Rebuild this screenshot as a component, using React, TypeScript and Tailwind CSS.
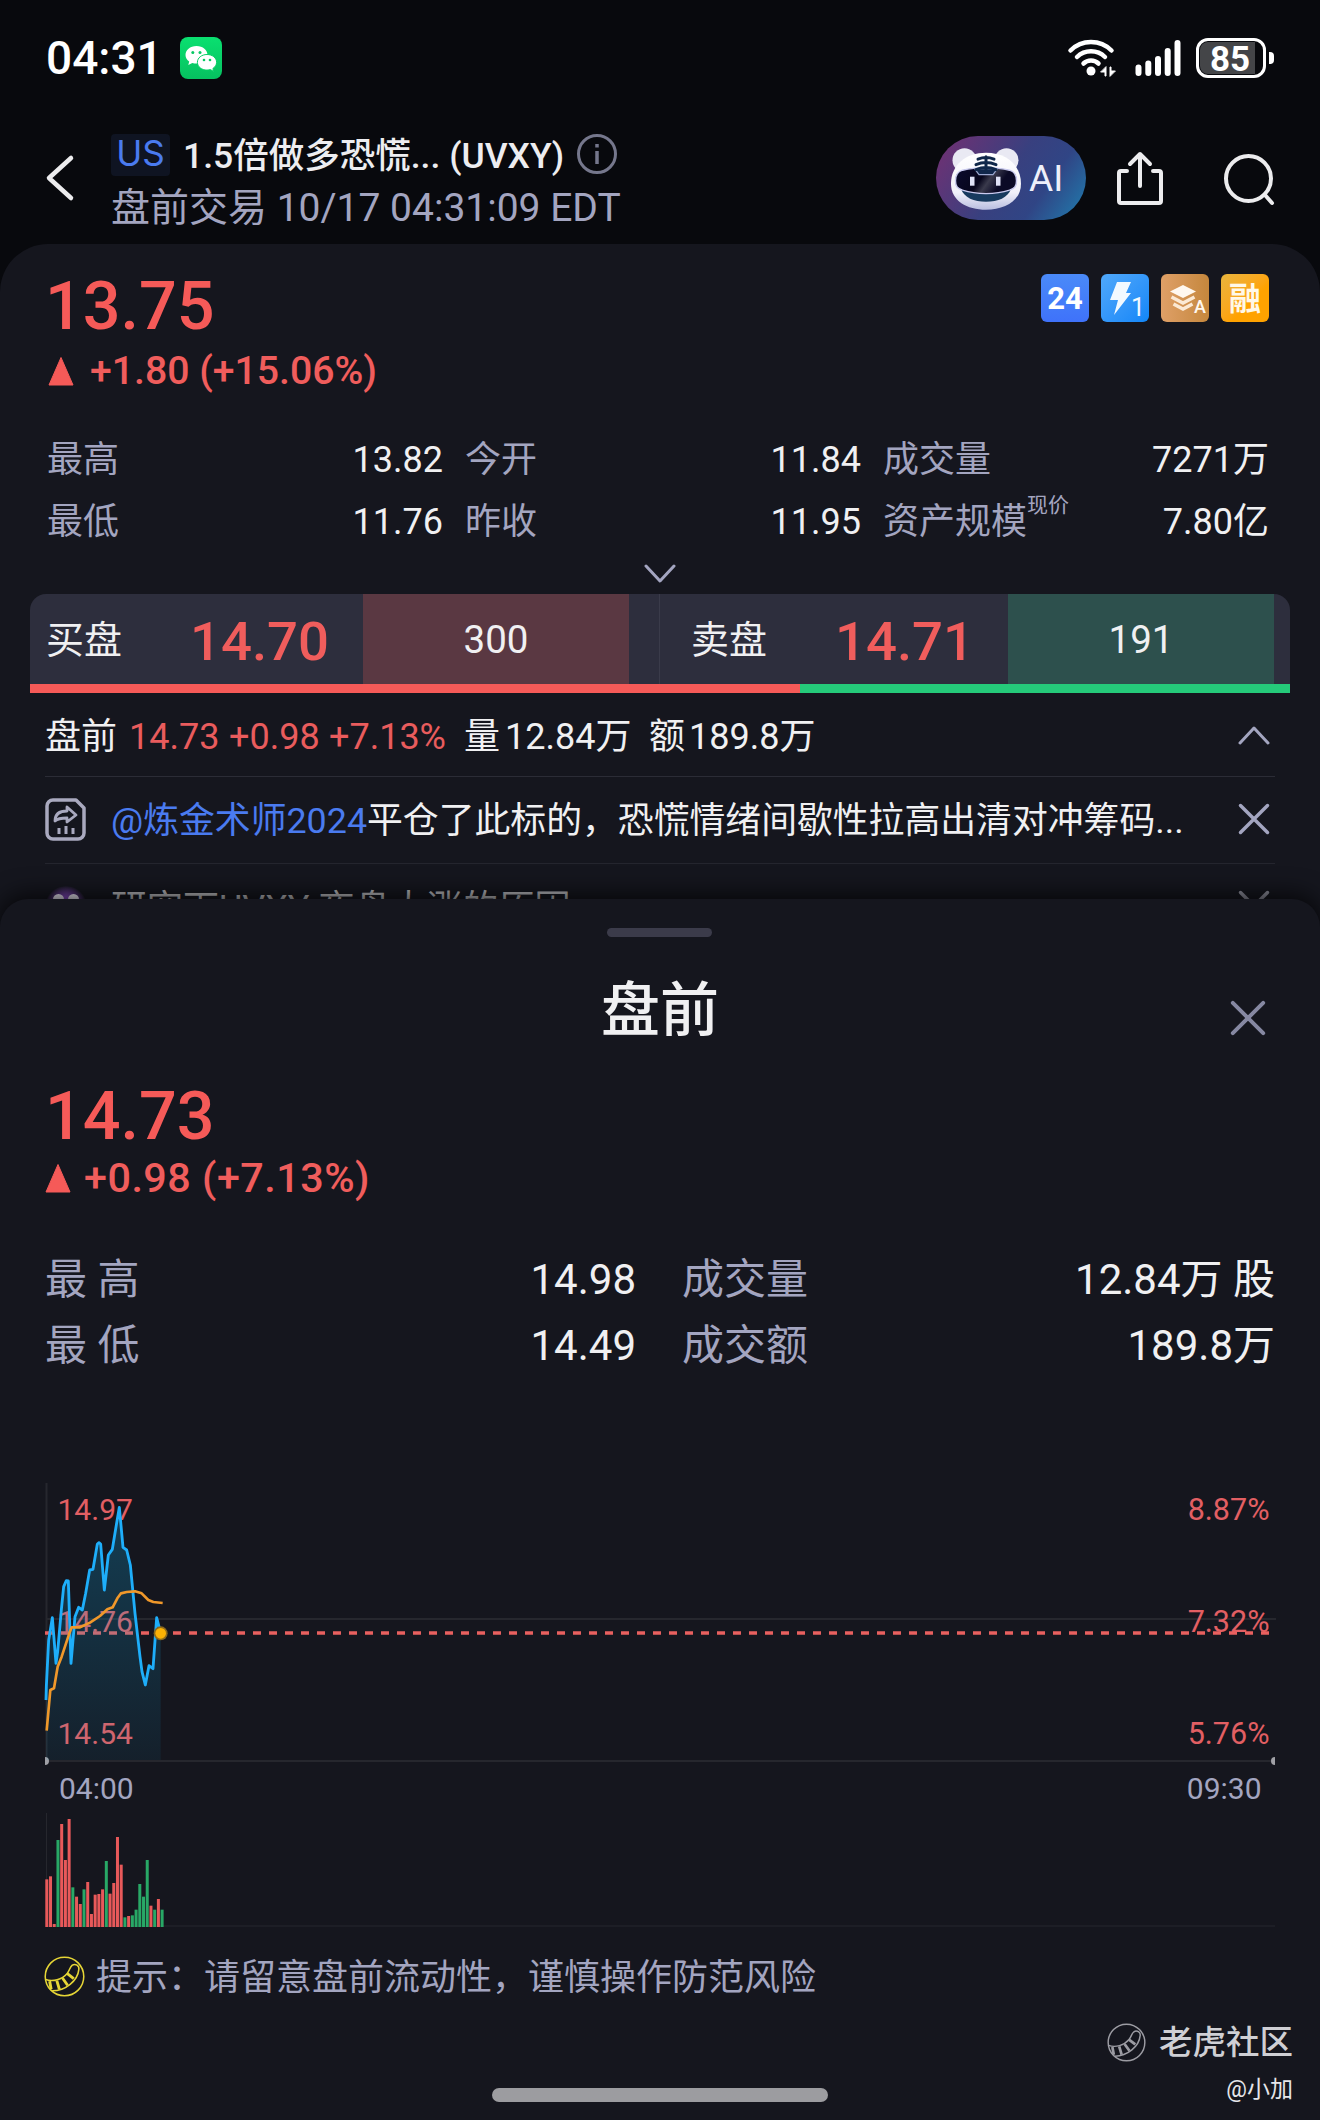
import type { ReactNode } from "react";

type Bar = { top: number; up: boolean }

// top edge of every volume bar, "up" bars are red
const volume: Bar[] = [
    { top: 358, up: true }, { top: 349, up: true }, { top: 492, up: true }, { top: 240, up: false },
    { top: 192, up: true }, { top: 300, up: true }, { top: 177, up: true }, { top: 382, up: false },
    { top: 410, up: true }, { top: 432, up: true }, { top: 388, up: false }, { top: 366, up: true },
    { top: 462, up: true }, { top: 404, up: true }, { top: 402, up: true }, { top: 388, up: true },
    { top: 303, up: false }, { top: 401, up: true }, { top: 369, up: true }, { top: 231, up: true },
    { top: 314, up: true }, { top: 472, up: false }, { top: 468, up: true }, { top: 466, up: false },
    { top: 449, up: false }, { top: 372, up: false }, { top: 410, up: false }, { top: 300, up: false },
    { top: 437, up: true }, { top: 449, up: false }, { top: 417, up: true }, { top: 449, up: false },
]

const priceLine =
    "78,690 79,650 86,510 97,443 108,580 113,545 124,420 131,350 139,332 145,333 153,580 165,440 176,412 187,420 197,370 209,300 219,298 232,222 237,218 242,222 253,360 265,255 277,238 289,165 298,112 309,232 320,240 331,285 345,430 360,560 366,605 376,645 387,587 399,596 410,443 422,489"

function StatusBar() {
    return <div className="flex h-[116px] items-center justify-between pl-[46px] pr-[46px]">
        <div className="flex items-center">
            <span className="w-[134px] text-[46px] leading-none font-medium text-white">04:31</span>
            <svg width="42" height="42" viewBox="0 0 42 42">
                <defs>
                    <linearGradient id="wx" x1="0" y1="0" x2="0" y2="1">
                        <stop offset="0" stopColor="#0ae070" />
                        <stop offset="1" stopColor="#06c160" />
                    </linearGradient>
                </defs>
                <rect width="42" height="42" rx="8" fill="url(#wx)" />
                <path d="M16.5 9C10 9 5.500 13 5.500 18c0 2.800 1.500 5 3.700 6.600L8.300 28l4-2.100c1.400.4 2.800.5 4.200.5C22.800 26.400 27.500 23 27.500 18S23 9 16.500 9z" fill="#fff" />
                <path d="M27 17.500c-5.400 0-9.600 3.400-9.600 7.800s4.200 7.800 9.600 7.800c1.200 0 2.300-.2 3.400-.5l3.300 1.800-.8-2.900c2.300-1.500 3.700-3.700 3.700-6.200 0-4.400-4.200-7.800-9.600-7.800z" fill="#fff" stroke="#08cf66" strokeWidth="1" />
                <g fill="#07c963">
                    <circle cx="12.800" cy="15.500" r="1.500" />
                    <circle cx="20" cy="15.500" r="1.500" />
                    <circle cx="24" cy="23" r="1.300" />
                    <circle cx="30" cy="23" r="1.300" />
                </g>
            </svg>
        </div>
        <div className="flex items-center">
            <svg width="50" height="40" viewBox="0 0 50 40" fill="none" stroke="#fff" strokeLinecap="round">
                <path d="M3.500 12.500a29 29 0 0 1 41 0" strokeWidth="4.500" />
                <path d="M10 19a20 20 0 0 1 28 0" strokeWidth="4.500" />
                <path d="M16.500 25.500a11 11 0 0 1 15 0" strokeWidth="4.500" />
                <circle cx="24" cy="33" r="4.500" fill="#fff" stroke="none" />
                <path d="M39 29v9h-1v-4h-4zM43 38v-9h1v4h4z" fill="#fff" stroke="#fff" strokeWidth="1" />
            </svg>
            <svg width="48" height="40" viewBox="0 0 48 40" className="ml-[18px]" stroke="#fff" strokeWidth="6" strokeLinecap="round">
                <path d="M3.500 29.500V35M13.300 25.500V35M23 21V35M32.700 13V35M42.500 5V35" />
            </svg>
            <div className="ml-[13px] flex h-[40px] w-[70px] rounded-[12px] border-[3px] border-white p-[1px]">
                <div className="flex w-[55px] items-center justify-center rounded-l-[8px] bg-[#444548] pt-[2px] pl-[5px] text-[35px] leading-none font-bold text-white">85</div>
            </div>
            <div className="ml-[3px] h-[12px] w-[5px] rounded-r-[4px] bg-white"></div>
        </div>
    </div>
}

function TigerHead() {
    return <svg width="72" height="66" viewBox="0 -2.700 72 66">
        <defs>
            <linearGradient id="head" x1="0" y1="0" x2="0" y2="1">
                <stop offset="0" stopColor="#ffffff" />
                <stop offset="0.700" stopColor="#f1f1fa" />
                <stop offset="1" stopColor="#b9bee0" />
            </linearGradient>
            <linearGradient id="visor" x1="0" y1="0" x2="1" y2="0.300">
                <stop offset="0" stopColor="#0b0a2e" />
                <stop offset="0.500" stopColor="#07061c" />
                <stop offset="0.640" stopColor="#3a3a4c" />
                <stop offset="0.850" stopColor="#0b0a26" />
            </linearGradient>
        </defs>
        <circle cx="14.500" cy="12.500" r="12" fill="#e9e9f3" />
        <circle cx="56.500" cy="12.500" r="12" fill="#e9e9f3" />
        <path d="M36 5C16 5 1 17 1 36c0 17 16 26 35 26s35-9 35-26C71 17 56 5 36 5z" fill="url(#head)" />
        <path d="M11 41c3 9 13 13 25 13s22-4 25-13z" fill="#173a5e" />
        <path d="M5.500 33c0-6 2-9 7-10.500 14-3.500 33-3.500 47 0 5 1.500 7 4.500 7 10.500s-2 7.500-7 9.500c-14 4.500-33 4.500-47 0-5-2-7-3.500-7-9.500z" fill="url(#visor)" stroke="#c9caef" strokeWidth="1.400" />
        <path d="M24.500 21l4.500 6h14l4.500-6z" fill="#11274b" stroke="#9ba7cf" strokeWidth="1.200" />
        <path d="M36 9v15M28 11.500c5-2 11-2 16 0M26 17c6-2.500 14-2.500 20 0M26 22c6-2.500 14-2.500 20 0" fill="none" stroke="#10284a" strokeWidth="3" strokeLinecap="round" />
        <rect x="20" y="29" width="4.500" height="9" fill="#dfe2f6" />
        <rect x="46" y="29" width="4.500" height="9" fill="#dfe2f6" />
    </svg>
}

function Header() {
    return <div className="flex h-[128px] pl-[45px] pr-[42px]">
        <svg width="32" height="48" viewBox="0 0 32 48" className="mt-[38px]" fill="none" stroke="#ececee" strokeWidth="4.500" strokeLinecap="round" strokeLinejoin="round">
            <path d="M26 4L4 24L26 44" />
        </svg>
        <div className="ml-[34px] flex flex-col pt-[17px]">
            <div className="flex h-[44px] items-center whitespace-nowrap">
                <span className="flex h-[42px] w-[59px] items-center justify-center rounded-[4px] bg-[#0f1422] pb-[3px] font-['Inter','Noto_Sans_CJK_SC',sans-serif] text-[35px] leading-none text-[#4a7bf0]">US</span>
                <span className="ml-[13px] w-[393px] pt-[3px] text-[35.500px] leading-none font-medium text-[#ededf0]">1.5倍做多恐慌... (UVXY)</span>
                <svg width="42" height="42" viewBox="0 0 42 42" fill="none" stroke="#75778c" strokeWidth="3">
                    <circle cx="21" cy="20" r="18.500" />
                    <path d="M21 17v13" strokeWidth="3.500" />
                    <path d="M21 10v3.500" strokeWidth="3.500" />
                </svg>
            </div>
            <div className="mt-[9px] h-[44px] text-[39px] leading-[44px] whitespace-nowrap text-[#a3a5c0]">盘前交易 10/17 04:31:09 EDT</div>
        </div>
        <div className="mt-[20px] ml-auto flex h-[84px] items-center">
            <div className="flex h-[84px] w-[150px] items-center rounded-full bg-linear-[125deg,#6b3274_8%,#38407f_48%,#304585_70%,#1f7fb0_100%] pl-[14px]">
                <TigerHead />
                <span className="ml-[7px] pt-[1px] text-[37px] leading-none text-[#eef0fa]">AI</span>
            </div>
            <svg width="50" height="58" viewBox="0 0 50 58" className="ml-[29px]" fill="none" stroke="#ececee" strokeWidth="4" strokeLinecap="round" strokeLinejoin="round">
                <path d="M12 22H6q-2 0-2 2v28q0 2 2 2h38q2 0 2-2V24q0-2-2-2h-6M25 37V5M15 15L25 5l10 10" />
            </svg>
            <svg width="56" height="56" viewBox="0 0 56 56" className="ml-[57px]" fill="none" stroke="#ececee" strokeWidth="4" strokeLinecap="round">
                <circle cx="26.500" cy="28.500" r="22.500" />
                <path d="M43 45l7 8" />
            </svg>
        </div>
    </div>
}

function Badges() {
    return <div className="flex gap-[12px] pt-[2px]">
        <div className="flex size-[48px] items-center justify-center rounded-[6px] bg-linear-to-b from-[#4a8af8] to-[#3f72fa] pt-[1px] text-[31px] leading-none font-bold text-white">24</div>
        <div className="size-[48px] overflow-hidden rounded-[6px] bg-linear-to-br from-[#4fa8fa] to-[#0f86f8]">
            <svg width="48" height="48" viewBox="0 0 48 48">
                <path d="M16 8h14l-5 11h5L13 41l4-15H9z" fill="#f2f9ff" />
                <text x="30" y="42" fontSize="25" fill="#f2f9ff">1</text>
            </svg>
        </div>
        <div className="size-[48px] overflow-hidden rounded-[6px] bg-linear-to-r from-[#dfa067] to-[#c5873c]">
            <svg width="48" height="48" viewBox="0 0 48 48">
                <path d="M22 11l13 6.500-13 6.500-13-6.500z" fill="#fff8ef" />
                <path d="M10.500 23l11.500 6 11.500-6M12.500 30l9.500 5 9.500-5" fill="none" stroke="#fbe9d4" strokeWidth="3.500" />
                <text x="33" y="39" fontSize="18" fontWeight="500" fill="#fff8ef">A</text>
            </svg>
        </div>
        <div className="flex size-[48px] items-center justify-center rounded-[6px] bg-linear-to-br from-[#e9b53c] to-[#ffa200] to-60% pt-[1px] text-[32px] leading-none font-bold text-[#fff8e8]">融</div>
    </div>
}

function Change({ text, look }: { text: string, look: string }) {
    return <div className="flex h-[40px] items-center leading-none font-medium whitespace-pre text-[#f05d5c]">
        <svg width="28" height="30" viewBox="0 0 28 30">
            <path d="M14 1.500L26 29H2z" fill="#f55a58" stroke="#f55a58" strokeLinejoin="round" />
        </svg>
        <span className={"pt-[2px] " + look}>{text}</span>
    </div>
}

function Stat({ label, sup, value, width }: { label: string, sup?: string, value: string, width: string }) {
    return <div className={"flex items-center justify-between whitespace-pre " + width}>
        <span className="flex text-[#a3a5c0]">
            {label}
            {sup && <span className="mt-[4px] text-[21px] leading-[20px]">{sup}</span>}
        </span>
        <span className="text-[#f0f0f2]">{value}</span>
    </div>
}

function Quote({ name, price, size, color, end }: { name: string, price: string, size: string, color: string, end?: ReactNode }) {
    return <div className="flex shrink-0 items-center">
        <span className="w-[144px] pt-[2px] text-[38px] text-[#f0f0f2]">{name}</span>
        <span className="w-[173px] pt-[4px] text-[54.500px] font-medium text-[#f05d5c]">{price}</span>
        <span className={"flex h-[90px] w-[266px] items-center justify-center pt-[3px] text-[38.500px] text-[#f0f0f2] " + color}>{size}</span>
        {end}
    </div>
}

function Cross({ size, color }: { size: number, color: string }) {
    return <svg width={size} height={size} viewBox="0 0 32 32" className="shrink-0" stroke={color} strokeWidth="3.500" strokeLinecap="round">
        <path d="M2.500 2.500L29.500 29.500M29.500 2.500L2.500 29.500" />
    </svg>
}

function TailLogo({ color, size }: { color: string, size: number }) {
    return <svg width={size} height={size} viewBox="0 0 40 40" fill="none" stroke={color} strokeWidth="1.500">
        <circle cx="20" cy="20" r="18.800" />
        <path d="M1.600 23c7 2.500 16 0 21-6 2.500-3 2.500-6 5-8 3-2 7 .5 6.400 4C33 24 21 34 8 34" />
        <path d="M5.500 24.500l1.500 8M12.500 24l2.500 8.500M18 21.500l5 7M22.500 17l6.500 5" strokeWidth="2.800" />
    </svg>
}

function Chart() {
    return <svg width="1320" height="470" viewBox="0 0 1320 470" className="block font-['Roboto',sans-serif]" fontSize="30">
        <defs>
            <linearGradient id="area" x1="0" y1="110" x2="0" y2="870" gradientUnits="userSpaceOnUse">
                <stop offset="0" stopColor="#10a5dd" stopOpacity="0.280" />
                <stop offset="1" stopColor="#10a5dd" stopOpacity="0.070" />
            </linearGradient>
        </defs>
        {/* axes */}
        <g stroke="#26272e" strokeWidth="2">
            <path d="M46.500 13V291M46 149H1276M46 291H1274" />
            <path d="M46.500 343V457M46 456H1275" strokeWidth="1" />
        </g>
        <path d="M45 287a4 4 0 0 1 0 8zM1275 287a4 4 0 0 0 0 8z" fill="#a0a0a6" />
        <g fill="#e25f63">
            <text x="57.500" y="50">14.97</text>
            <text x="57.500" y="162">14.76</text>
            <text x="57.500" y="274">14.54</text>
            <g fontSize="30.500" textAnchor="end">
                <text x="1269.500" y="50">8.87%</text>
                <text x="1269.500" y="162">7.32%</text>
                <text x="1269.500" y="274">5.76%</text>
            </g>
        </g>
        <path d="M45 163H1270" stroke="#e8605f" strokeWidth="3.500" strokeDasharray="8 8" />
        {/* price and average */}
        <g transform="translate(20 0) scale(0.33333)" fill="none" strokeLinejoin="round">
            <polygon points={priceLine + " 422,870 78,870"} fill="url(#area)" />
            <polyline points={priceLine} stroke="#1eaefa" strokeWidth="8.500" />
            <polyline points="80,782 91,660 102,655 113,590 125,560 147,493 155,472 180,472 210,458 240,438 262,418 278,412 292,385 303,370 320,366 345,364 365,370 385,390 400,396 428,399" stroke="#f0982a" strokeWidth="8" />
            <circle cx="422" cy="490" r="21" fill="#8d6a1c" />
            <circle cx="422" cy="490" r="16" fill="#fbb104" />
        </g>
        <g fill="#a3a5c0">
            <text x="59" y="329">04:00</text>
            <text x="1261.500" y="329" textAnchor="end">09:30</text>
        </g>
        {/* volume */}
        {volume.map((bar, i) => {
            return <rect key={i} x={45.3 + i * 3.72} y={290 + bar.top / 3} width="3" height={(501 - bar.top) / 3} fill={bar.up ? "#e8595a" : "#28a866"} />
        })}
    </svg>
}

function PreMarketSheet() {
    return <div className="absolute inset-x-0 top-[899px] flex h-[1221px] flex-col rounded-t-[28px] bg-[#15161e] pt-[29px] shadow-[0_-4px_24px_rgba(0,0,0,0.75)]">
        <div className="ml-[607px] h-[9px] w-[105px] rounded-full bg-[#3b3b4a]"></div>
        <div className="mt-[30px] grid h-[84px] grid-cols-3 items-center px-[54px]">
            <span></span>
            <span className="pt-[2px] text-center text-[59px] leading-none font-medium text-[#f0f0f2]">盘前</span>
            <span className="flex justify-end pt-[17px]"><Cross size={36} color="#8688a2" /></span>
        </div>
        <div className="mt-[32px] h-[66px] pl-[45px] text-[66.500px] leading-[66px] font-medium text-[#f55a58]">14.73</div>
        <div className="mt-[9px] pl-[44px]"><Change text="+0.98 (+7.13%)" look="ml-[12px] text-[41.300px] tracking-[0.5px]" /></div>
        <div className="mt-[49px] flex flex-wrap gap-x-[46px] pl-[45px] text-[42px] leading-[66px]">
            <Stat label="最 高" value="14.98" width="w-[591px]" />
            <Stat label="成交量" value="12.84万 股" width="w-[593px]" />
            <Stat label="最 低" value="14.49" width="w-[591px]" />
            <Stat label="成交额" value="189.8万" width="w-[593px]" />
        </div>
        <div className="mt-[91px]"><Chart /></div>
        <div className="mt-[16px] flex h-[40px] items-center pl-[44px] text-[36px] leading-none whitespace-nowrap text-[#a3a5c0]">
            <TailLogo color="#e6d636" size={41} />
            <span className="ml-[11px] pt-[3px]">提示：请留意盘前流动性，谨慎操作防范风险</span>
        </div>
        <div className="mt-[28px] flex h-[36px] items-center justify-end pr-[27px]">
            <TailLogo color="#9c9ca3" size={39} />
            <span className="ml-[13px] pt-[2px] text-[33.500px] leading-none font-medium text-[#cfcfd4]">老虎社区</span>
        </div>
        <div className="mt-[18px] h-[24px] pr-[27px] text-right text-[23px] leading-[24px] text-[#e6e6ea]">@小加</div>
        <div className="absolute bottom-[18px] left-[492px] h-[14px] w-[336px] rounded-full bg-[#9c9ca0]"></div>
    </div>
}

export default function App() {
    return <div className="relative h-[2120px] w-[1320px] overflow-hidden bg-[#08090d] font-['Roboto','Noto_Sans_CJK_SC',sans-serif]">
        <StatusBar />
        <Header />
        <div className="h-[1876px] rounded-t-[48px] bg-[#15161e] pt-[28px]">
            <div className="flex h-[66px] justify-between pl-[45px] pr-[51px]">
                <span className="pt-[1px] text-[66.500px] leading-[66px] font-medium text-[#f55a58]">13.75</span>
                <Badges />
            </div>
            <div className="mt-[13px] pl-[47px]"><Change text="+1.80 (+15.06%)" look="ml-[15px] text-[39.200px]" /></div>
            <div className="mt-[38px] flex flex-wrap gap-x-[22px] pl-[47px] text-[36px] leading-[62px]">
                <Stat label="最高" value="13.82" width="w-[396px]" />
                <Stat label="今开" value="11.84" width="w-[396px]" />
                <Stat label="成交量" value="7271万" width="w-[386px]" />
                <Stat label="最低" value="11.76" width="w-[396px]" />
                <Stat label="昨收" value="11.95" width="w-[396px]" />
                <Stat label="资产规模" sup="现价" value="7.80亿" width="w-[386px]" />
            </div>
            <div className="flex h-[41px] items-center justify-center">
                <svg width="34" height="20" viewBox="0 0 34 20" fill="none" stroke="#a3a5c0" strokeWidth="3" strokeLinecap="round" strokeLinejoin="round">
                    <path d="M3 2L17 17L31 2" />
                </svg>
            </div>

            {/* best bid and ask */}
            <div className="mx-[30px] overflow-hidden rounded-t-[16px] bg-[#2d2e3d]">
                <div className="flex h-[90px] pl-[16px] leading-none">
                    <Quote name="买盘" price="14.70" size="300" color="bg-[#5a3842]" end={<span className="mr-[31px] ml-[30px] h-[90px] w-[1px] bg-[#3a3b4a]"></span>} />
                    <Quote name="卖盘" price="14.71" size="191" color="bg-[#2d504d]" />
                </div>
                <div className="flex h-[9px]">
                    <div className="w-[770px] bg-[#f55a58]"></div>
                    <div className="flex-1 bg-[#25ca7a]"></div>
                </div>
            </div>

            <div className="mx-[45px] text-[36px] leading-none whitespace-nowrap text-[#f0f0f2]">
                <div className="flex h-[84px] items-center border-b border-[#2b2c36] pt-[5px]">
                    <span className="w-[84px]">盘前</span>
                    <span className="w-[100px] text-[#e95c5d]">14.73</span>
                    <span className="w-[100px] text-[#e95c5d]">+0.98</span>
                    <span className="w-[135px] text-[#e95c5d]">+7.13%</span>
                    <span className="w-[41px]">量</span>
                    <span className="w-[144px]">12.84万</span>
                    <span className="w-[40px]">额</span>
                    <span>189.8万</span>
                    <svg width="34" height="20" viewBox="0 0 34 20" className="mr-[4px] mb-[4px] ml-auto" fill="none" stroke="#a3a5c0" strokeWidth="3" strokeLinecap="round" strokeLinejoin="round">
                        <path d="M3 18L17 3L31 18" />
                    </svg>
                </div>
                <div className="flex h-[87px] items-center border-b border-[#24252e]">
                    <svg width="42" height="44" viewBox="0 0 42 44" className="mb-[3px]" fill="none" stroke="#a9a9bf" strokeWidth="3.500" strokeLinejoin="round">
                        <path d="M8 3h23l8 8v25a6 6 0 0 1-6 6H8a6 6 0 0 1-6-6V9a6 6 0 0 1 6-6z" />
                        <path d="M10 24c0-7 5-10 12-10v-4l9 8-9 7v-4c-5 0-9 0-12 3z" strokeWidth="2.800" />
                        <path d="M14 31v6M21 29v8M28 31v6" strokeWidth="3" />
                    </svg>
                    <span className="ml-[24px] pt-[4px] text-[35.850px]"><span className="text-[#4a7bf0]">@炼金术师2024</span>平仓了此标的，恐慌情绪间歇性拉高出清对冲筹码...</span>
                    <span className="mr-[5px] mb-[2px] ml-auto"><Cross size={32} color="#a3a5c0" /></span>
                </div>
                <div className="flex h-[86px] items-center text-[#b4b4b8]">
                    <div className="flex size-[42px] items-start justify-center gap-[4px] rounded-full bg-[radial-gradient(#7d45b5_35%,transparent_72%)] pt-[8px]">
                        <span className="size-[11px] rounded-full bg-[#e8e4f0]"></span>
                        <span className="size-[11px] rounded-full bg-[#e8e4f0]"></span>
                    </div>
                    <span className="ml-[24px] pt-[3px]">研究下UVXY 夜盘大涨的原因</span>
                    <span className="mr-[5px] mb-[2px] ml-auto"><Cross size={32} color="#8a8b98" /></span>
                </div>
            </div>
        </div>
        <PreMarketSheet />
    </div>
}
